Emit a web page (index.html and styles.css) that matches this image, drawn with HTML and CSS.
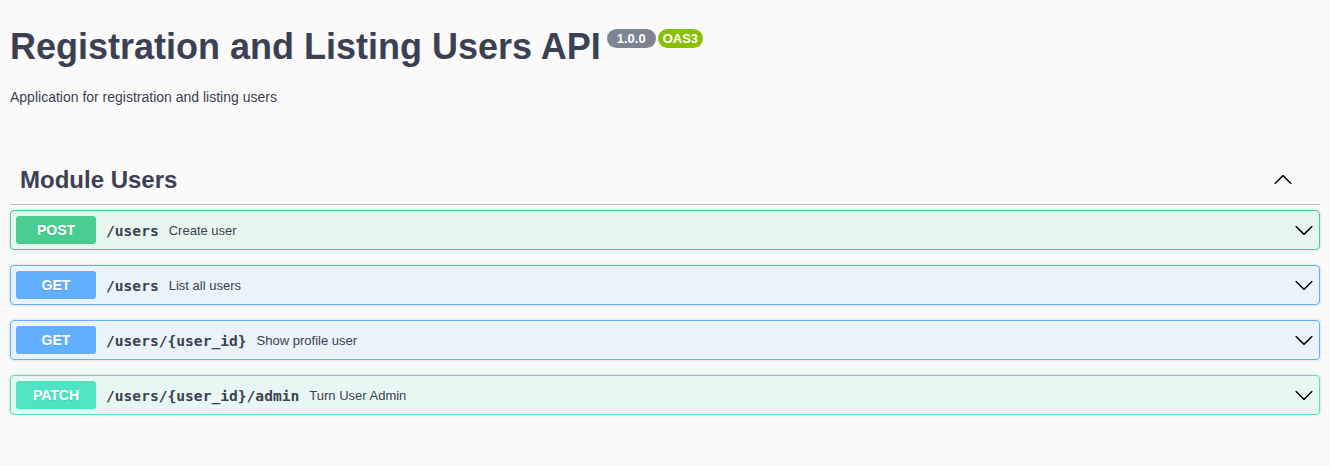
FILE: index.html
```html
<!DOCTYPE html>
<html lang="en">
<head>
<meta charset="utf-8">
<title>Registration and Listing Users API</title>
<link rel="stylesheet" href="styles.css">
</head>
<body>
<div class="wrapper">
  <div class="info">
    <div class="title-row">
      <h2 class="title">Registration and Listing Users API</h2>
      <div class="badges">
        <span class="badge version">1.0.0</span>
        <span class="badge oas">OAS3</span>
      </div>
    </div>
    <p class="description">Application for registration and listing users</p>
  </div>

  <section class="tag-section">
    <h3 class="tag">
      <span class="tag-name">Module Users</span>
      <svg class="arrow arrow-up" width="20" height="20" viewBox="0 0 20 20" aria-hidden="true"><path transform="rotate(180 10 10)" d="M17.418 6.109c.272-.268.709-.268.979 0s.271.701 0 .969l-7.908 7.83c-.27.268-.707.268-.979 0l-7.908-7.83c-.27-.268-.27-.701 0-.969.271-.268.709-.268.979 0L10 13.25l7.418-7.141z"/></svg>
    </h3>
    <div class="ops">
      <div class="opblock post">
        <span class="method">POST</span>
        <span class="path">/users</span>
        <span class="summary">Create user</span>
        <svg class="arrow" width="20" height="20" viewBox="0 0 20 20" aria-hidden="true"><path d="M17.418 6.109c.272-.268.709-.268.979 0s.271.701 0 .969l-7.908 7.83c-.27.268-.707.268-.979 0l-7.908-7.83c-.27-.268-.27-.701 0-.969.271-.268.709-.268.979 0L10 13.25l7.418-7.141z"/></svg>
      </div>
      <div class="opblock get">
        <span class="method">GET</span>
        <span class="path">/users</span>
        <span class="summary">List all users</span>
        <svg class="arrow" width="20" height="20" viewBox="0 0 20 20" aria-hidden="true"><path d="M17.418 6.109c.272-.268.709-.268.979 0s.271.701 0 .969l-7.908 7.83c-.27.268-.707.268-.979 0l-7.908-7.83c-.27-.268-.27-.701 0-.969.271-.268.709-.268.979 0L10 13.25l7.418-7.141z"/></svg>
      </div>
      <div class="opblock get">
        <span class="method">GET</span>
        <span class="path">/users/{user_id}</span>
        <span class="summary">Show profile user</span>
        <svg class="arrow" width="20" height="20" viewBox="0 0 20 20" aria-hidden="true"><path d="M17.418 6.109c.272-.268.709-.268.979 0s.271.701 0 .969l-7.908 7.83c-.27.268-.707.268-.979 0l-7.908-7.83c-.27-.268-.27-.701 0-.969.271-.268.709-.268.979 0L10 13.25l7.418-7.141z"/></svg>
      </div>
      <div class="opblock patch">
        <span class="method">PATCH</span>
        <span class="path">/users/{user_id}/admin</span>
        <span class="summary">Turn User Admin</span>
        <svg class="arrow" width="20" height="20" viewBox="0 0 20 20" aria-hidden="true"><path d="M17.418 6.109c.272-.268.709-.268.979 0s.271.701 0 .969l-7.908 7.83c-.27.268-.707.268-.979 0l-7.908-7.83c-.27-.268-.27-.701 0-.969.271-.268.709-.268.979 0L10 13.25l7.418-7.141z"/></svg>
      </div>
    </div>
  </section>
</div>
</body>
</html>
```
FILE: styles.css
```css
html, body {
  margin: 0;
  padding: 0;
  background: #fafafa;
}
body {
  font-family: "Liberation Sans", Arial, sans-serif;
  color: #3b4151;
}
.wrapper {
  padding: 0 10px;
}
.info {
  padding-top: 26px;
}
.title-row {
  display: flex;
  align-items: flex-start;
}
.title {
  margin: 0;
  font-size: 36px;
  line-height: 41px;
  font-weight: bold;
  color: #3b4151;
}
.badges {
  display: flex;
  gap: 2px;
  margin: 3px 0 0 6px;
}
.badge {
  display: inline-block;
  font-size: 13px;
  line-height: 15px;
  font-weight: bold;
  color: #fff;
  border-radius: 57px;
  padding: 2px 10px;
}
.badge.version {
  background: #7d8492;
}
.badge.oas {
  background: #89bf04;
  padding: 2px 5px;
}
.description {
  margin: 22px 0 0;
  font-size: 14px;
  line-height: 16px;
  color: #3b4151;
}
.tag-section {
  margin-top: 51px;
}
.tag {
  display: flex;
  align-items: center;
  margin: 0 0 5px;
  padding: 10px 20px 10px 10px;
  border-bottom: 1px solid rgba(59, 65, 81, 0.3);
  font-size: 24px;
  line-height: 28px;
  font-weight: bold;
  color: #3b4151;
}
.tag-name {
  flex: 1;
}
.arrow-up {
  margin-right: 7px;
}
.ops {
  display: flex;
  flex-direction: column;
  gap: 15px;
}
.opblock {
  display: flex;
  align-items: center;
  padding: 5px;
  border: 1px solid;
  border-radius: 4px;
  box-shadow: 0 0 3px rgba(0, 0, 0, 0.19);
}
.opblock.post {
  background: rgba(73, 204, 144, 0.1);
  border-color: #49cc90;
}
.opblock.get {
  background: rgba(97, 175, 254, 0.1);
  border-color: #61affe;
}
.opblock.patch {
  background: rgba(80, 227, 194, 0.1);
  border-color: #50e3c2;
}
.method {
  min-width: 80px;
  padding: 6px 0;
  font-size: 14px;
  line-height: 16px;
  font-weight: bold;
  text-align: center;
  color: #fff;
  border-radius: 3px;
  text-shadow: 0 1px 0 rgba(0, 0, 0, 0.1);
}
.post .method { background: #49cc90; }
.get .method { background: #61affe; }
.patch .method { background: #50e3c2; }
.path {
  padding: 0 10px;
  font-family: "DejaVu Sans Mono", "Liberation Mono", monospace;
  font-size: 14.6px;
  font-weight: bold;
  color: #3b4151;
}
.summary {
  flex: 1;
  font-size: 13px;
  color: #3b4151;
}
.arrow {
  flex: none;
  fill: #000;
}
```
